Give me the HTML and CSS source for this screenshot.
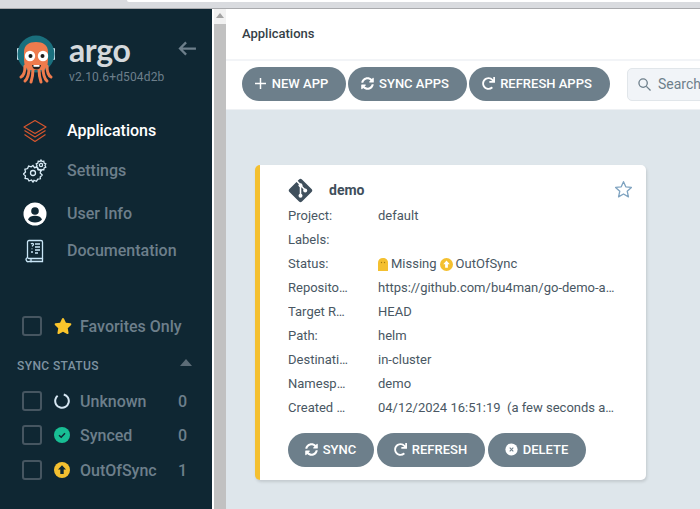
FILE: index.html
```html
<!DOCTYPE html>
<html lang="en">
<head>
<meta charset="utf-8">
<title>Applications - Argo CD</title>
<link rel="stylesheet" href="styles.css">
</head>
<body>
<svg class="defs" width="0" height="0" aria-hidden="true">
  <symbol id="i-sync" viewBox="0 0 512 512"><path fill="currentColor" d="M370.72 133.28C339.458 104.008 298.888 87.962 255.848 88c-77.458.068-144.328 53.178-162.791 126.85-1.344 5.363-6.122 9.15-11.651 9.15H24.103c-7.498 0-13.194-6.807-11.807-14.176C33.933 94.924 134.813 8 256 8c66.448 0 126.791 26.136 171.315 68.685L463.03 40.97C478.149 25.851 504 36.559 504 57.941V192c0 13.255-10.745 24-24 24H345.941c-21.382 0-32.09-25.851-16.971-40.971l41.75-41.749zM32 296h134.059c21.382 0 32.09 25.851 16.971 40.971l-41.75 41.75c31.262 29.273 71.835 45.319 114.876 45.28 77.418-.07 144.315-53.144 162.787-126.849 1.344-5.363 6.122-9.15 11.651-9.15h57.304c7.498 0 13.194 6.807 11.807 14.176C478.067 417.076 377.187 504 256 504c-66.448 0-126.791-26.136-171.315-68.685L48.97 471.03C33.851 486.149 8 475.441 8 454.059V320c0-13.255 10.745-24 24-24z"/></symbol>
  <symbol id="i-redo" viewBox="0 0 512 512"><path fill="currentColor" d="M500.33 0h-47.41a12 12 0 0 0-12 12.57l4 82.76A247.42 247.42 0 0 0 256 8C119.34 8 7.9 119.53 8 256.19 8.1 393.07 119.1 504 256 504a247.1 247.1 0 0 0 166.18-63.91 12 12 0 0 0 .48-17.43l-34-34a12 12 0 0 0-16.38-.55A176 176 0 1 1 402.1 157.8l-101.53-4.87a12 12 0 0 0-12.57 12v47.41a12 12 0 0 0 12 12h200.33a12 12 0 0 0 12-12V12a12 12 0 0 0-12-12z"/></symbol>
  <symbol id="i-star" viewBox="0 0 576 512"><path fill="currentColor" d="M259.3 17.8L194 150.2 47.9 171.5c-26.2 3.8-36.7 36.1-17.7 54.6l105.7 103-25 145.5c-4.5 26.3 23.2 46 46.4 33.7L288 439.6l130.7 68.7c23.2 12.2 50.9-7.4 46.4-33.7l-25-145.5 105.7-103c19-18.5 8.5-50.8-17.7-54.6L382 150.2 316.7 17.8c-11.7-23.6-45.6-23.9-57.4 0z"/></symbol>
  <symbol id="i-outofsync" viewBox="0 0 16 16"><circle cx="8" cy="8" r="8" fill="#f4c030"/><path d="M8 3.200 12 7.600H9.700V12H6.300V7.600H4z" fill="#0f2733"/></symbol>
</svg>
<div class="chrome"><div class="chrome-tab"></div></div>
<div class="app">
  <aside class="sidebar">
    <div class="brand">
      <svg class="logo" viewBox="0 0 40 50" width="40" height="50" aria-hidden="true">
        <rect x="1" y="14" width="3" height="12" rx="1" fill="#cfe3ee"/>
        <rect x="36" y="14" width="3" height="12" rx="1" fill="#cfe3ee"/>
        <circle cx="20" cy="20" r="18.500" fill="#1a6f7d"/>
        <path d="M8 26V18C8 11 13 8 20 8s12 3 12 10v8c0 5-2 8-4 10H12c-2-2-4-5-4-10z" fill="#ef7b4d"/>
        <path d="M9 32c0 6-2 10-4 11M13 34c0 6-2 11-4 13M17 35c0 6-1 10-2 13M23 35c0 6 1 10 2 13M27 34c0 6 2 11 4 13M31 32c0 6 2 10 4 11" fill="none" stroke="#ef7b4d" stroke-width="3" stroke-linecap="round"/>
        <circle cx="14" cy="22" r="5.200" fill="#fff"/><circle cx="27" cy="22" r="5.200" fill="#fff"/>
        <circle cx="14.500" cy="22" r="2" fill="#1b1b1b"/><circle cx="26.500" cy="22" r="2" fill="#1b1b1b"/>
        <path d="M16 31h9c-.5 3-2 4.500-4.500 4.500S16.500 34 16 31z" fill="#222"/>
        <rect x="17.500" y="31" width="6" height="1.800" fill="#fff"/>
      </svg>
      <div class="brand-text">
        <div class="wordmark">argo</div>
        <div class="version">v2.10.6+d504d2b</div>
      </div>
      <svg class="collapse" viewBox="0 0 20 16" width="19" height="15" aria-hidden="true"><path d="M19 8H2M8.500 1.500 2 8l6.500 6.500" fill="none" stroke="#6d7f8b" stroke-width="2.400"/></svg>
    </div>
    <nav class="nav">
      <a class="nav-item nav-apps active">
        <svg class="nav-icon" viewBox="0 0 24 24" width="24" height="24" aria-hidden="true"><g fill="none" stroke="#d6562e" stroke-width="1.200" stroke-linejoin="round"><path d="M12 1.500 23 8 12 14.500 1 8z"/><path d="M1.500 11.500 12 18l10.500-6.500"/><path d="M1.500 15.500 12 22.500l10.500-7"/></g></svg>
        <span>Applications</span>
      </a>
      <a class="nav-item nav-settings">
        <svg class="nav-icon" viewBox="0 0 24 24" width="24" height="24" aria-hidden="true"><g fill="none" stroke="#d9ecf7" stroke-width="1.300"><circle cx="10" cy="14" r="2.500"/><path d="M10 6.500 11.500 8.700 14 8l1 2.500 2.800.7-.6 2.800 2 2-2 2 .2 1.800-2.700.3-1.200 2.200-2.500-1L10 23l-1.500-2-2.500 1-1.200-2.200-2.700-.3.400-2.600-2-1.900 2-2-.6-2.700 2.700-.8 1-2.400 2.600.7z"/><circle cx="18" cy="6" r="1.600"/><path d="M18 1l1 1.500 1.800-.3.300 1.800 1.700.8-.8 1.700.8 1.700-1.700.8-.3 1.800-1.800-.3-1 1.400-1-1.400-1.800.3-.3-1.800-1.700-.8.800-1.700-.8-1.700 1.700-.8.300-1.800 1.800.3z"/></g></svg>
        <span>Settings</span>
      </a>
      <a class="nav-item nav-user">
        <svg class="nav-icon" viewBox="0 0 24 24" width="24" height="24" aria-hidden="true"><circle cx="12" cy="12" r="11.500" fill="#fff"/><circle cx="12" cy="9" r="3.800" fill="#0f2733"/><path d="M5 17.500c1-2.800 4-3.800 7-3.800s6 1 7 3.800C17.500 19.500 15 20.500 12 20.500s-5.500-1-7-3z" fill="#0f2733"/></svg>
        <span>User Info</span>
      </a>
      <a class="nav-item nav-docs">
        <svg class="nav-icon" viewBox="0 0 24 24" width="24" height="24" aria-hidden="true"><g fill="none" stroke="#c9e6f7" stroke-width="1.300"><path d="M6 1.500h12a1.500 1.500 0 0 1 1.500 1.500v16.500H6A1.500 1.500 0 0 1 4.500 18V3A1.500 1.500 0 0 1 6 1.500z"/><path d="M4.500 18.500A1.500 1.500 0 0 0 6 22.500h13.500v-3M8 20v3.500"/><path d="M8 5c1-1 3-.6 2.300 1L9 7.400M9 9.500v.800M8 13h2M12 5h5M12 8h5M12 11h5M12 14h3"/></g></svg>
        <span>Documentation</span>
      </a>
    </nav>
    <div class="filter-row favorites">
      <span class="check"></span>
      <svg class="status-icon" width="18" height="16" aria-hidden="true"><use href="#i-star" color="#fbc52b"/></svg>
      <span class="filter-label">Favorites Only</span>
    </div>
    <div class="filter-head"><span>SYNC STATUS</span><span class="caret"></span></div>
    <div class="filter-row row-unknown">
      <span class="check"></span>
      <svg class="status-icon" viewBox="0 0 16 16" width="16" height="16" aria-hidden="true"><circle cx="8" cy="8" r="6.800" fill="none" stroke="#d5e6f2" stroke-width="2" stroke-dasharray="36 7" transform="rotate(-75 8 8)"/></svg>
      <span class="filter-label">Unknown</span><span class="count">0</span>
    </div>
    <div class="filter-row row-synced">
      <span class="check"></span>
      <svg class="status-icon" viewBox="0 0 16 16" width="16" height="16" aria-hidden="true"><circle cx="8" cy="8" r="8" fill="#18be94"/><path d="M5 8.200 7.200 10.300 11 6.200" fill="none" stroke="#0f2733" stroke-width="1.500"/></svg>
      <span class="filter-label">Synced</span><span class="count">0</span>
    </div>
    <div class="filter-row row-out">
      <span class="check"></span>
      <svg class="status-icon" width="16" height="16" aria-hidden="true"><use href="#i-outofsync"/></svg>
      <span class="filter-label">OutOfSync</span><span class="count">1</span>
    </div>
  </aside>
  <div class="gutter"></div>
  <div class="scrollbar"><div class="scroll-arrow"></div><div class="scroll-thumb"></div></div>
  <main class="content">
    <header class="page-title">Applications</header>
    <div class="toolbar">
      <button class="btn btn-new"><svg class="ico-plus" viewBox="0 0 12 12" width="11" height="11" aria-hidden="true"><path d="M6 0v12M0 6h12" stroke="currentColor" stroke-width="1.600"/></svg>NEW APP</button>
      <button class="btn btn-syncapps"><svg class="ico" aria-hidden="true"><use href="#i-sync"/></svg>SYNC APPS</button>
      <button class="btn btn-refreshapps"><svg class="ico" aria-hidden="true"><use href="#i-redo"/></svg>REFRESH APPS</button>
      <div class="search">
        <svg viewBox="0 0 14 14" width="13" height="13" aria-hidden="true"><circle cx="5.500" cy="5.500" r="4.500" fill="none" stroke="#6d7f8b" stroke-width="1.400"/><path d="M9 9l4.500 4.500" stroke="#6d7f8b" stroke-width="1.400"/></svg>
        <span>Search applications...</span>
      </div>
    </div>
    <section class="canvas">
      <article class="card">
        <div class="card-head">
          <svg class="git" viewBox="0 0 24 24" width="25" height="25" aria-hidden="true"><rect x="3.500" y="3.500" width="17" height="17" rx="2" transform="rotate(45 12 12)" fill="#3f4f5c"/><path d="M8 2.500 12 6.500V17M12 7l5 5" fill="none" stroke="#fff" stroke-width="1.500"/><circle cx="12" cy="7" r="1.900" fill="#fff"/><circle cx="12" cy="17" r="1.900" fill="#fff"/><circle cx="16.500" cy="12" r="1.900" fill="#fff"/></svg>
          <span class="app-name">demo</span>
          <svg class="fav" viewBox="0 0 20 20" width="19" height="19" aria-hidden="true"><path d="M10 1.800 12.400 7.200 18.300 7.800 13.900 11.800 15.200 17.700 10 14.700 4.800 17.700 6.100 11.800 1.700 7.800 7.600 7.200z" fill="none" stroke="#7fa3c0" stroke-width="1.400" stroke-linejoin="round"/></svg>
        </div>
        <dl class="meta">
          <dt>Project:</dt><dd>default</dd>
          <dt>Labels:</dt><dd></dd>
          <dt>Status:</dt><dd class="status"><svg viewBox="0 0 10 13" width="10" height="13" aria-hidden="true"><path d="M0 13V4.500C0 2 2 0 5 0s5 2 5 4.500V13H0z" fill="#f4c030"/><circle cx="3.500" cy="4.500" r=".7" fill="#a47b10"/><circle cx="6.500" cy="4.500" r=".7" fill="#a47b10"/></svg><span>Missing</span><svg width="13" height="13" viewBox="0 0 16 16" aria-hidden="true"><circle cx="8" cy="8" r="8" fill="#f4c030"/><path d="M8 3.200 12 7.600H9.700V12H6.300V7.600H4z" fill="#fff"/></svg><span>OutOfSync</span></dd>
          <dt>Repository:</dt><dd>https://github.com/bu4man/go-demo-app-helm-chart</dd>
          <dt>Target Revision:</dt><dd>HEAD</dd>
          <dt>Path:</dt><dd>helm</dd>
          <dt>Destination:</dt><dd>in-cluster</dd>
          <dt>Namespace:</dt><dd>demo</dd>
          <dt>Created At:</dt><dd>04/12/2024 16:51:19 &nbsp;(a few seconds ago)</dd>
        </dl>
        <div class="card-actions">
          <button class="btn btn-sync"><svg class="ico" aria-hidden="true"><use href="#i-sync"/></svg>SYNC</button>
          <button class="btn btn-refresh"><svg class="ico" aria-hidden="true"><use href="#i-redo"/></svg>REFRESH</button>
          <button class="btn btn-delete"><svg class="ico" viewBox="0 0 16 16" aria-hidden="true"><circle cx="8" cy="8" r="7.500" fill="#fff"/><path d="M5.800 5.800l4.400 4.400M10.200 5.800l-4.400 4.400" stroke="#6d7f8b" stroke-width="1.300"/></svg>DELETE</button>
        </div>
      </article>
    </section>
  </main>
</div>
</body>
</html>
```
FILE: styles.css
```css
* { box-sizing: border-box; }
html, body { margin: 0; padding: 0; height: 100%; overflow: hidden; }
body { font-family: Roboto, "Liberation Sans", sans-serif; background: #fff; }
.defs { display: block; height: 0; }

.chrome { height: 9px; background: #d9dbdf; border-bottom: 1px solid #a9aaad; }
.chrome-tab { height: 2px; margin-left: 127px; background: #fff; border-bottom-left-radius: 4px; }

.app { display: flex; height: 500px; }
.sidebar { width: 212px; flex: none; background: #0f2733; color: #6d7f8b; }
.gutter { width: 2px; flex: none; background: #fff; }
.scrollbar { width: 12px; flex: none; background: #f1f1f1; display: flex; flex-direction: column; }
.scroll-arrow { height: 15px; display: flex; justify-content: center; padding-top: 4px; }
.scroll-arrow::before { content: ""; width: 0; height: 0; border-left: 4px solid transparent; border-right: 4px solid transparent; border-bottom: 5px solid #a3a3a3; }
.scroll-thumb { flex: 1; background: #c1c1c1; }

.brand { display: flex; padding: 25px 0 0 16px; height: 102px; }
.logo { flex: none; }
.brand-text { margin-left: 13px; width: 95px; }
.wordmark { font-family: Lato, sans-serif; font-size: 32px; line-height: 32px; color: #d5d9dc; height: 35px; margin-top: 0; font-weight: 700; letter-spacing: -.4px; }
.version { font-size: 12px; line-height: 14px; margin-top: 1px; letter-spacing: .15px; }
.collapse { margin: 7px 0 0 14px; flex: none; }

.nav-item { display: flex; align-items: center; font-size: 16px; font-weight: 500; line-height: 20px; padding-left: 23px; }
.nav-item span { margin-left: 20px; }
.nav-icon { flex: none; }
.nav-apps { height: 40px; }
.nav-settings { height: 40px; }
.nav-user { height: 46px; }
.nav-docs { height: 28px; }
.active { color: #fff; }

.filter-row { display: flex; align-items: center; height: 24px; padding-left: 22px; font-size: 16px; font-weight: 500; color: #6d7f8b; }
.check { width: 20px; height: 20px; border: 2px solid #465661; border-radius: 3px; flex: none; }
.status-icon { margin-left: 12px; flex: none; }
.filter-label { margin-left: 10px; flex: 1; }
.count { width: 34px; flex: none; font-size: 16px; }
.favorites { margin-top: 49px; }
.favorites .status-icon { margin-left: 12px; width: 18px; }
.favorites .filter-label { margin-left: 8px; }
.filter-head { display: flex; justify-content: space-between; align-items: center; padding: 0 20px 0 17px; height: 16px; margin-top: 20px; font-size: 12px; font-weight: 500; letter-spacing: .4px; color: #7f93a1; }
.caret { width: 0; height: 0; border-left: 6px solid transparent; border-right: 6px solid transparent; border-bottom: 7px solid #5c6c77; margin-top: -7px; }
.row-unknown { margin-top: 15px; }
.row-synced { margin-top: 10px; }
.row-out { margin-top: 11px; }

.content { flex: 1; min-width: 0; display: flex; flex-direction: column; overflow: hidden; }
.page-title { height: 50px; flex: none; background: #fff; padding: 0 0 0 16px; font-size: 13px; font-weight: 500; line-height: 49px; color: #363f47; border-bottom: 2px solid #f2f4f7; box-sizing: content-box; }
.toolbar { height: 46px; flex: none; display: flex; align-items: center; padding: 0 0 2px 16px; background: #fff; border-bottom: 1px solid #eef1f4; box-sizing: content-box; }
.btn { display: inline-flex; align-items: center; justify-content: center; height: 34px; border: 0; border-radius: 17px; background: #6d7f8b; color: #fff; font-family: inherit; font-size: 13px; font-weight: 500; padding: 0 1px 2px 0; flex: none; }
.ico { width: 13px; height: 13px; margin-right: 5px; flex: none; }
.ico-plus { margin-right: 6px; }
.btn-new { width: 104px; margin-right: 2px; padding-right: 5px; }
.btn-syncapps { width: 119px; margin-right: 2px; padding-right: 5px; }
.btn-refreshapps { width: 141px; padding-right: 5px; }
.search { display: flex; align-items: center; flex: none; width: 200px; height: 33px; margin-left: 17px; padding-left: 10px; background: #f1f4f8; border: 1px solid #e1e6ea; border-radius: 5px; font-size: 14px; color: #6d7f8b; white-space: nowrap; }
.search span { margin-left: 7px; }

.canvas { flex: 1; background: #dee6eb; padding: 55px 0 0 29px; }
.card { width: 391px; height: 315px; background: #fff; border-left: 5px solid #f4c030; border-radius: 5px; box-shadow: 1px 2px 3px rgba(0, 0, 0, .12); padding: 0 0 0 28px; }
.card-head { display: flex; align-items: center; padding: 12px 0 1px; box-sizing: content-box; height: 26px; color: #3f4f5c; margin-left: 1px; }
.git { flex: none; margin-left: -1px; }
.app-name { font-size: 14px; font-weight: 700; margin-left: 16px; flex: 1; }
.fav { flex: none; margin: -2px 13px 0 0; }

.meta { display: grid; grid-template-columns: 61px 238px; column-gap: 29px; grid-auto-rows: 24px; margin: 0; font-size: 13px; line-height: 24px; color: #495763; }
.meta dt, .meta dd { margin: 0; white-space: nowrap; overflow: hidden; text-overflow: ellipsis; }
.status { display: flex; align-items: center; }
.status span { margin: 0 3px; }
.status span:last-child { margin-right: 0; }

.card-actions { display: flex; gap: 3px; margin-top: 13px; }
.btn-sync { width: 86px; }
.btn-refresh { width: 108px; }
.btn-delete { width: 98px; }
```
